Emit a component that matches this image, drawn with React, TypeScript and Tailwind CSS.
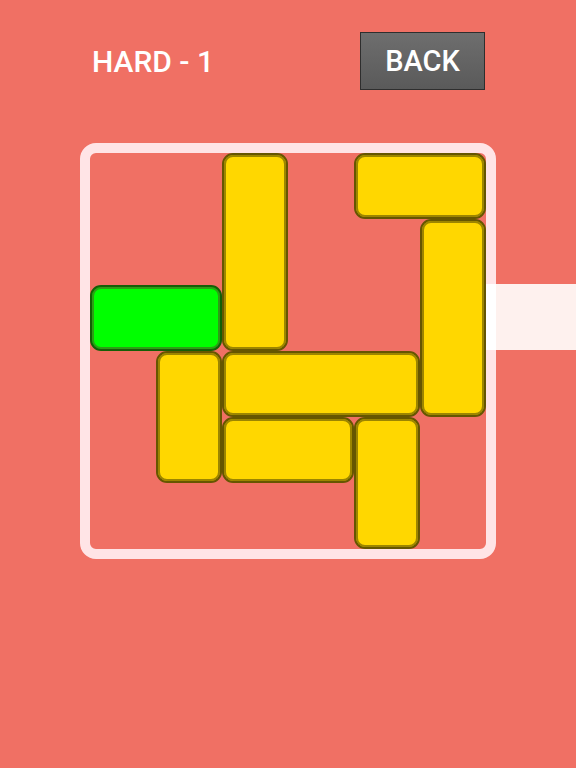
import React from 'react';

type Block = {
  col: number;
  row: number;
  w: number;
  h: number;
  target?: boolean;
};

const blocks: Block[] = [
  { col: 3, row: 1, w: 1, h: 3 },
  { col: 5, row: 1, w: 2, h: 1 },
  { col: 6, row: 2, w: 1, h: 3 },
  { col: 1, row: 3, w: 2, h: 1, target: true },
  { col: 2, row: 4, w: 1, h: 2 },
  { col: 3, row: 4, w: 3, h: 1 },
  { col: 3, row: 5, w: 2, h: 1 },
  { col: 5, row: 5, w: 1, h: 2 },
];

function Piece({ block }: { block: Block }) {
  const color = block.target
    ? 'bg-[#00ff00] border-[#145f06] shadow-[inset_0_0_0_2px_#2e9c16]'
    : 'bg-[#ffd700] border-[#665600] shadow-[inset_0_0_0_2px_#9c8500]';
  return (
    <div
      className={`rounded-[11px] border-2 ${color}`}
      style={{
        gridColumn: `${block.col} / span ${block.w}`,
        gridRow: `${block.row} / span ${block.h}`,
      }}
    />
  );
}

export default function App() {
  return (
    <div
      className="w-[576px] h-[768px] bg-[#f07064] flex flex-col"
      style={{ fontFamily: 'Roboto, "Liberation Sans", sans-serif' }}
    >
      <div className="flex items-center justify-between pt-[32px] pl-[92px] pr-[91px]">
        <div className="text-white text-[30px] font-medium leading-none pt-px">HARD - 1</div>
        <button className="w-[125px] h-[58px] border border-[#2e2e2e] bg-gradient-to-b from-[#6e6e6e] to-[#5a5a5a] text-white text-[29px] font-medium leading-none flex items-center justify-center">
          BACK
        </button>
      </div>
      <div className="relative mt-[53px] ml-[80px] w-[416px] h-[416px]">
        <div className="w-full h-full rounded-[16px] border-[10px] border-[#ffe4e6]">
          <div className="grid grid-cols-[repeat(6,66px)] grid-rows-[repeat(6,66px)] gap-0 p-0">
            {blocks.map((b, i) => (
              <Piece key={i} block={b} />
            ))}
          </div>
        </div>
        <div className="absolute left-[406px] top-[141px] w-[90px] h-[66px] flex">
          <div className="w-[10px] bg-white" />
          <div className="flex-1 bg-[#fef1ee]" />
        </div>
      </div>
    </div>
  );
}
